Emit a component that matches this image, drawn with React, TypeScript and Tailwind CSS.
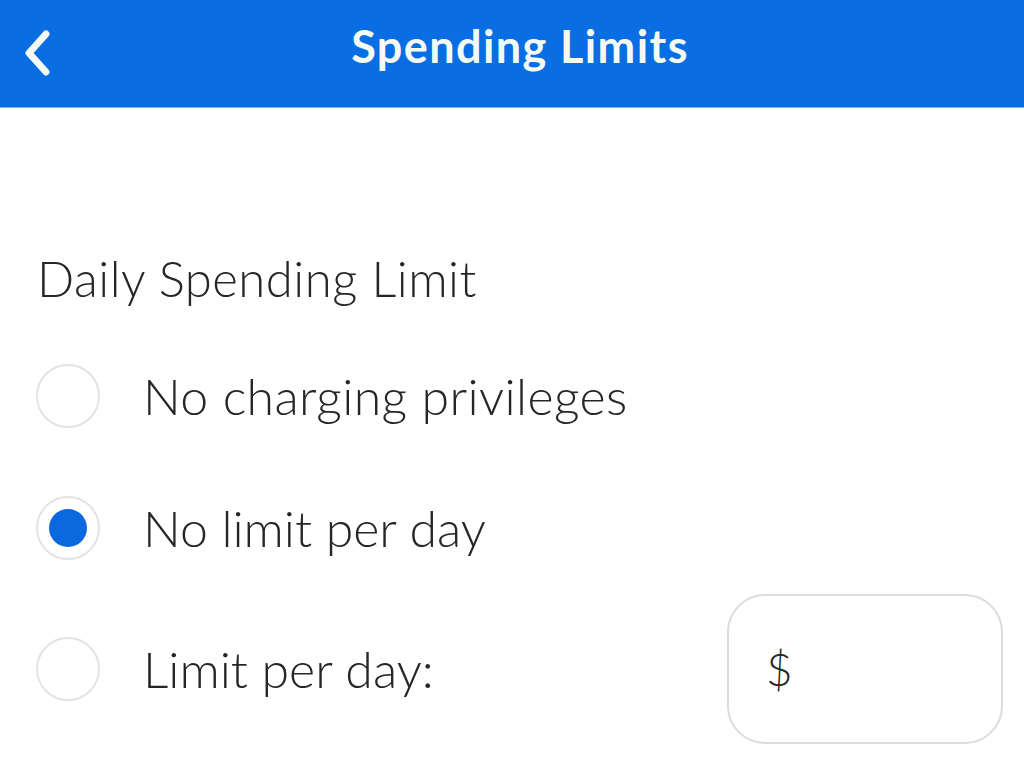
import React from 'react';

const Radio = ({ checked }: { checked?: boolean }) => (
  <div className="w-[64px] h-[64px] rounded-full border-2 border-[#e3e3e3] bg-white flex items-center justify-center shrink-0">
    {checked && <div className="w-[38px] h-[38px] rounded-full bg-[#0b68df]" />}
  </div>
);

export default function App() {
  return (
    <div className="w-[1024px] h-[773px] bg-white overflow-hidden" style={{ fontFamily: 'Lato, "Noto Sans", sans-serif' }}>
      <div className="h-[108px] bg-[#096de4] relative flex justify-center pt-[24px] border-b border-[#7fb0ee]">
        <svg className="absolute left-[20px] top-[28px]" width="34" height="48" viewBox="0 0 34 48" fill="none">
          <path d="M26 6 L9 25 L26 44" stroke="#f4fbf2" strokeWidth="7" strokeLinecap="round" strokeLinejoin="round" />
        </svg>
        <h1 className="text-[45px] leading-none font-bold text-[#f4fbf2] ml-[16px] tracking-[1.4px]">Spending Limits</h1>
      </div>
      <div className="pl-[37px] pt-[146px] text-[#262626] font-light">
        <div className="text-[49px] leading-none tracking-[0.5px]">Daily Spending Limit</div>
        <div className="mt-[61px] flex flex-col">
          <div className="flex items-center h-[64px] -ml-[1px]">
            <Radio />
            <span className="ml-[43px] text-[50px] leading-none tracking-[0.4px]">No charging privileges</span>
          </div>
          <div className="flex items-center h-[64px] mt-[68px] -ml-[1px]">
            <Radio checked />
            <span className="ml-[43px] text-[50px] leading-none">No limit per day</span>
          </div>
          <div className="flex items-center h-[150px] mt-[34px] -ml-[1px]">
            <Radio />
            <span className="ml-[43px] text-[50px] leading-none">Limit per day:</span>
            <div className="ml-auto mr-[21px] w-[276px] h-[150px] rounded-[38px] border-2 border-[#dcdcdc] flex items-center pl-[37px]">
              <span className="text-[46px] leading-none">$</span>
            </div>
          </div>
        </div>
      </div>
    </div>
  );
}
